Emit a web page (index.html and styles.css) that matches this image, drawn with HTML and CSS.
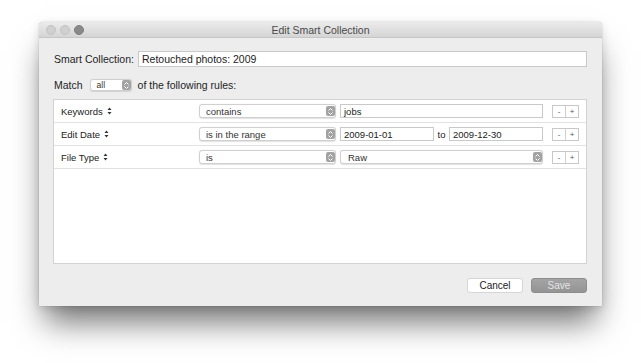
FILE: index.html
```html
<!DOCTYPE html>
<html lang="en">

<head>
  <meta charset="UTF-8" />
  <title>Edit Smart Collection</title>
  <link rel="stylesheet" href="styles.css">
</head>

<body>

  <div class="ventana">
    <div class="barra-titulo">
      <div class="semaforo">
        <span class="luz"></span>
        <span class="luz"></span>
        <span class="luz activa"></span>
      </div>
      <div class="titulo">Edit Smart Collection</div>
    </div>

    <div class="contenido">
      <div class="fila-nombre">
        <label class="etiqueta">Smart Collection:</label>
        <div class="campo campo-nombre">Retouched photos: 2009</div>
      </div>

      <div class="fila-match">
        <span class="etiqueta">Match</span>
        <div class="selector selector-all">
          <span>all</span>
          <span class="flechas"><svg width="7" height="9" viewBox="0 0 7 9"><path d="M1.5 3.5 L3.5 1.5 L5.5 3.5 M1.5 5.5 L3.5 7.5 L5.5 5.5" fill="none" stroke="#fff" stroke-width="1"/></svg></span>
        </div>
        <span class="etiqueta">of the following rules:</span>
      </div>

      <div class="reglas">
        <div class="regla">
          <div class="campo-regla">Keywords <svg class="mini" width="5" height="8" viewBox="0 0 5 8"><path d="M0.5 3 L2.5 0.5 L4.5 3 Z M0.5 5 L2.5 7.5 L4.5 5 Z" fill="#333"/></svg></div>
          <div class="selector operador">
            <span>contains</span>
            <span class="flechas"><svg width="7" height="9" viewBox="0 0 7 9"><path d="M1.5 3.5 L3.5 1.5 L5.5 3.5 M1.5 5.5 L3.5 7.5 L5.5 5.5" fill="none" stroke="#fff" stroke-width="1"/></svg></span>
          </div>
          <div class="campo valor">jobs</div>
          <div class="botones-regla"><span class="mas-menos">-</span><span class="mas-menos">+</span></div>
        </div>

        <div class="regla">
          <div class="campo-regla">Edit Date <svg class="mini" width="5" height="8" viewBox="0 0 5 8"><path d="M0.5 3 L2.5 0.5 L4.5 3 Z M0.5 5 L2.5 7.5 L4.5 5 Z" fill="#333"/></svg></div>
          <div class="selector operador">
            <span>is in the range</span>
            <span class="flechas"><svg width="7" height="9" viewBox="0 0 7 9"><path d="M1.5 3.5 L3.5 1.5 L5.5 3.5 M1.5 5.5 L3.5 7.5 L5.5 5.5" fill="none" stroke="#fff" stroke-width="1"/></svg></span>
          </div>
          <div class="rango">
            <div class="campo fecha">2009-01-01</div>
            <span class="to">to</span>
            <div class="campo fecha">2009-12-30</div>
          </div>
          <div class="botones-regla"><span class="mas-menos">-</span><span class="mas-menos">+</span></div>
        </div>

        <div class="regla">
          <div class="campo-regla">File Type <svg class="mini" width="5" height="8" viewBox="0 0 5 8"><path d="M0.5 3 L2.5 0.5 L4.5 3 Z M0.5 5 L2.5 7.5 L4.5 5 Z" fill="#333"/></svg></div>
          <div class="selector operador">
            <span>is</span>
            <span class="flechas"><svg width="7" height="9" viewBox="0 0 7 9"><path d="M1.5 3.5 L3.5 1.5 L5.5 3.5 M1.5 5.5 L3.5 7.5 L5.5 5.5" fill="none" stroke="#fff" stroke-width="1"/></svg></span>
          </div>
          <div class="selector valor">
            <span>Raw</span>
            <span class="flechas"><svg width="7" height="9" viewBox="0 0 7 9"><path d="M1.5 3.5 L3.5 1.5 L5.5 3.5 M1.5 5.5 L3.5 7.5 L5.5 5.5" fill="none" stroke="#fff" stroke-width="1"/></svg></span>
          </div>
          <div class="botones-regla"><span class="mas-menos">-</span><span class="mas-menos">+</span></div>
        </div>
      </div>

      <div class="pie">
        <button class="boton">Cancel</button>
        <button class="boton guardar">Save</button>
      </div>
    </div>
  </div>

</body>

</html>
```

FILE: styles.css
```css
html {
  background: #ffffff;
}

body {
  font-family: "Liberation Sans", Arial, sans-serif;
  margin: 0;
  padding: 0 0 60px 0;
  background: #ffffff;
}

.ventana {
  margin: 22px 0 0 39px;
  width: 563px;
  height: 284px;
  background: #ededed;
  border-radius: 4px 4px 0 0;
  box-shadow: 0 22px 30px -6px rgba(0, 0, 0, 0.55), 0 2px 10px rgba(0, 0, 0, 0.12), 0 0 1px rgba(0, 0, 0, 0.4);
  display: flex;
  flex-direction: column;
}

.barra-titulo {
  height: 16px;
  background: linear-gradient(#ebebeb, #d5d5d5);
  border-bottom: 1px solid #c6c6c6;
  border-radius: 4px 4px 0 0;
  display: flex;
  align-items: center;
  position: relative;
}

.semaforo {
  display: flex;
  gap: 4px;
  margin-left: 7px;
}

.luz {
  width: 10px;
  height: 10px;
  border-radius: 50%;
  background: #d0d0d0;
  border: 1px solid #c2c2c2;
  box-sizing: border-box;
}

.luz.activa {
  background: #8a8a8a;
  border-color: #7c7c7c;
}

.titulo {
  position: absolute;
  left: 0;
  right: 0;
  text-align: center;
  font-size: 10.5px;
  color: #4a4a4a;
}

.contenido {
  flex: 1;
  padding: 13px 15px 13px 15px;
  display: flex;
  flex-direction: column;
}

.etiqueta {
  font-size: 10.5px;
  color: #1e1e1e;
}

.fila-nombre {
  display: flex;
  align-items: center;
  gap: 4px;
}

.campo {
  background: #fff;
  border: 1px solid #c9c9c9;
  box-sizing: border-box;
  font-size: 9.5px;
  color: #222;
  display: flex;
  align-items: center;
  padding-left: 3px;
}

.campo-nombre {
  flex: 1;
  height: 16px;
  font-size: 10.5px;
}

.fila-match {
  display: flex;
  align-items: center;
  margin-top: 11px;
  height: 14px;
}

.selector {
  background: #fff;
  border: 1px solid #d0d0d0;
  border-radius: 3px;
  box-sizing: border-box;
  display: flex;
  align-items: center;
  justify-content: space-between;
  font-size: 9.5px;
  color: #333;
  padding-left: 6px;
  box-shadow: 0 0.5px 1px rgba(0, 0, 0, 0.12);
}

.selector-all {
  width: 42px;
  height: 12px;
  margin: 0 6px 0 7px;
  font-size: 8.5px;
  padding-left: 6px;
}

.flechas {
  width: 9px;
  height: 10px;
  background: #a3a3a3;
  border-radius: 2px;
  display: flex;
  align-items: center;
  justify-content: center;
}

.reglas {
  margin-top: 7px;
  height: 165px;
  background: #fff;
  border: 1px solid #d2d2d2;
  box-sizing: border-box;
  margin-left: -1px;
}

.regla {
  height: 23px;
  border-bottom: 1px solid #e2e2e2;
  box-sizing: border-box;
  display: flex;
  align-items: center;
  padding: 0 7px 0 7px;
  font-size: 9.5px;
  color: #222;
}

.campo-regla {
  width: 138px;
  display: flex;
  align-items: center;
  gap: 4px;
}

.mini {
  display: block;
}

.operador {
  width: 137px;
  height: 14px;
  margin-right: 4px;
}

.valor {
  width: 203px;
  height: 14px;
}

.selector.valor {
  padding-left: 7px;
}

.rango {
  width: 203px;
  display: flex;
  align-items: center;
}

.fecha {
  width: 94px;
  height: 14px;
}

.to {
  flex: 1;
  text-align: center;
  font-size: 9.5px;
}

.botones-regla {
  margin-left: auto;
  display: flex;
  border: 1px solid #c8c8c8;
  background: #fff;
}

.mas-menos {
  width: 12px;
  height: 11px;
  font-size: 8px;
  text-align: center;
  line-height: 11px;
  color: #555;
}

.mas-menos + .mas-menos {
  border-left: 1px solid #d0d0d0;
}

.pie {
  display: flex;
  justify-content: flex-end;
  gap: 8px;
  margin-top: 14px;
}

.boton {
  width: 56px;
  height: 15px;
  padding: 0;
  border: 1px solid #d6d6d6;
  border-radius: 3px;
  background: #fff;
  font-family: "Liberation Sans", Arial, sans-serif;
  font-size: 10px;
  color: #222;
}

.guardar {
  background: linear-gradient(#a4a4a4, #949494);
  border-color: #8e8e8e;
  color: #e4e4e4;
}
```
